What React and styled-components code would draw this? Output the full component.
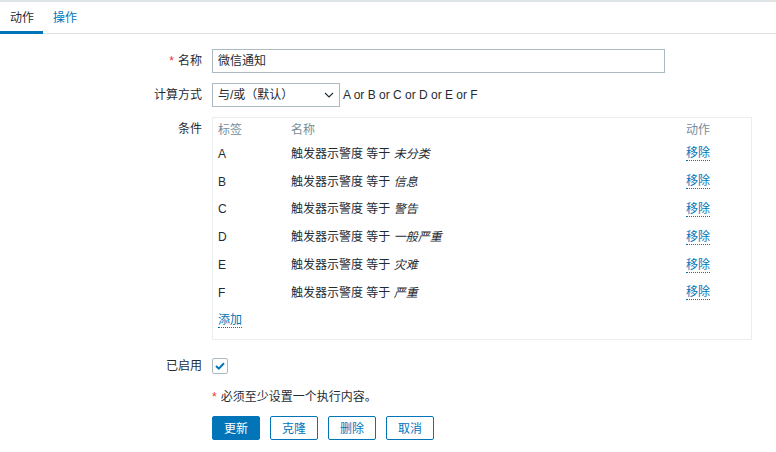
import React from "react";
import styled, { createGlobalStyle } from "styled-components";

const Global = createGlobalStyle`
  html, body { margin: 0; padding: 0; background: #fff; }
  body {
    font-family: "Liberation Sans", Arial, "Noto Sans CJK SC", sans-serif;
    font-size: 12px;
    color: #1f2c33;
  }
`;

const Page = styled.div`
  width: 776px;
  height: 452px;
  border-top: 2px solid #dfe4e7;
  box-sizing: border-box;
  overflow: hidden;
`;

const Tabs = styled.div`
  display: flex;
  border-bottom: 1px solid #dfe4e7;
  height: 31px;
`;

const Tab = styled.div`
  padding: 3px 9px 0 10px;
  line-height: 26px;
  border-bottom: ${(p) => (p.$active ? "3px solid #0275b8" : "3px solid transparent")};
  color: ${(p) => (p.$active ? "#1f2c33" : "#0275b8")};
  margin-bottom: -1px;
`;

const Form = styled.div`
  display: grid;
  grid-template-columns: 202px 1fr;
  column-gap: 10px;
  padding-top: 15px;
`;

const Label = styled.div`
  text-align: right;
  line-height: 24px;
  margin-bottom: ${(p) => p.$mb || 10}px;
`;

const Field = styled.div`
  display: flex;
  align-items: ${(p) => p.$align || "center"};
  gap: 3px;
  margin-bottom: ${(p) => p.$mb || 10}px;
  min-height: 24px;
`;

const Star = styled.span`
  color: #e33734;
  margin-right: 4px;
`;

const Input = styled.div`
  box-sizing: border-box;
  width: 453px;
  height: 24px;
  border: 1px solid #acbbc2;
  padding: 0 5px;
  line-height: 22px;
`;

const Select = styled.div`
  box-sizing: border-box;
  width: 128px;
  height: 24px;
  border: 1px solid #acbbc2;
  padding: 0 5px;
  line-height: 22px;
  display: flex;
  justify-content: space-between;
  align-items: center;
`;

const Box = styled.div`
  box-sizing: border-box;
  width: 540px;
  border: 1px solid #ebeef0;
  padding: 0 5px 5px;
`;

const Row = styled.div`
  display: grid;
  grid-template-columns: 73px 1fr 60px;
  align-items: center;
  line-height: 14px;
  height: ${(p) => p.$h}px;
  padding-top: ${(p) => p.$pt || 0}px;
  box-sizing: border-box;
  color: ${(p) => (p.$head ? "#768d99" : "#1f2c33")};
`;

const Em = styled.i`
  color: #1f2c33;
`;

const Link = styled.span`
  color: #0275b8;
  border-bottom: 1px dotted #0275b8;
  line-height: 14px;
  justify-self: start;
`;

const Check = styled.div`
  box-sizing: border-box;
  width: 16px;
  height: 16px;
  border: 1px solid #acbbc2;
  border-radius: 2px;
  display: flex;
  align-items: center;
  justify-content: center;
`;

const Note = styled.div`
  line-height: 14px;
  margin-bottom: 12px;
`;

const Buttons = styled.div`
  display: flex;
  gap: 10px;
`;

const Button = styled.div`
  box-sizing: border-box;
  width: 48px;
  height: 24px;
  border-radius: 2px;
  border: 1px solid #0275b8;
  background: ${(p) => (p.$primary ? "#0275b8" : "#fff")};
  color: ${(p) => (p.$primary ? "#fff" : "#0275b8")};
  display: flex;
  align-items: center;
  justify-content: center;
`;

const conditions = [
  ["A", "未分类"],
  ["B", "信息"],
  ["C", "警告"],
  ["D", "一般严重"],
  ["E", "灾难"],
  ["F", "严重"],
];

export default function App() {
  return (
    <>
      <Global />
      <Page>
        <Tabs>
          <Tab $active>动作</Tab>
          <Tab>操作</Tab>
        </Tabs>
        <Form>
          <Label>
            <Star>*</Star>名称
          </Label>
          <Field>
            <Input>微信通知</Input>
          </Field>

          <Label>计算方式</Label>
          <Field>
            <Select>
              <span>与/或（默认）</span>
              <svg width="10" height="6" viewBox="0 0 10 6">
                <path d="M1 1l4 4 4-4" fill="none" stroke="#1f2c33" strokeWidth="1.1" />
              </svg>
            </Select>
            <span>A or B or C or D or E or F</span>
          </Field>

          <Label $mb={14}>条件</Label>
          <Field $mb={14} $align="flex-start">
            <Box>
              <Row $head $h={22} $pt={2}>
                <span>标签</span>
                <span>名称</span>
                <span>动作</span>
              </Row>
              {conditions.map(([k, v]) => (
                <Row key={k} $h={27.8}>
                  <span>{k}</span>
                  <span>
                    触发器示警度 等于 <Em>{v}</Em>
                  </span>
                  <Link>移除</Link>
                </Row>
              ))}
              <Row $h={27}>
                <Link>添加</Link>
              </Row>
            </Box>
          </Field>

          <Label $mb={12}>已启用</Label>
          <Field $mb={12}>
            <Check>
              <svg width="10" height="8" viewBox="0 0 10 8">
                <path d="M1 4l2.8 2.6L9 1.2" fill="none" stroke="#0275b8" strokeWidth="2" />
              </svg>
            </Check>
          </Field>

          <div />
          <div>
            <Note>
              <Star>*</Star>必须至少设置一个执行内容。
            </Note>
            <Buttons>
              <Button $primary>更新</Button>
              <Button>克隆</Button>
              <Button>删除</Button>
              <Button>取消</Button>
            </Buttons>
          </div>
        </Form>
      </Page>
    </>
  );
}
